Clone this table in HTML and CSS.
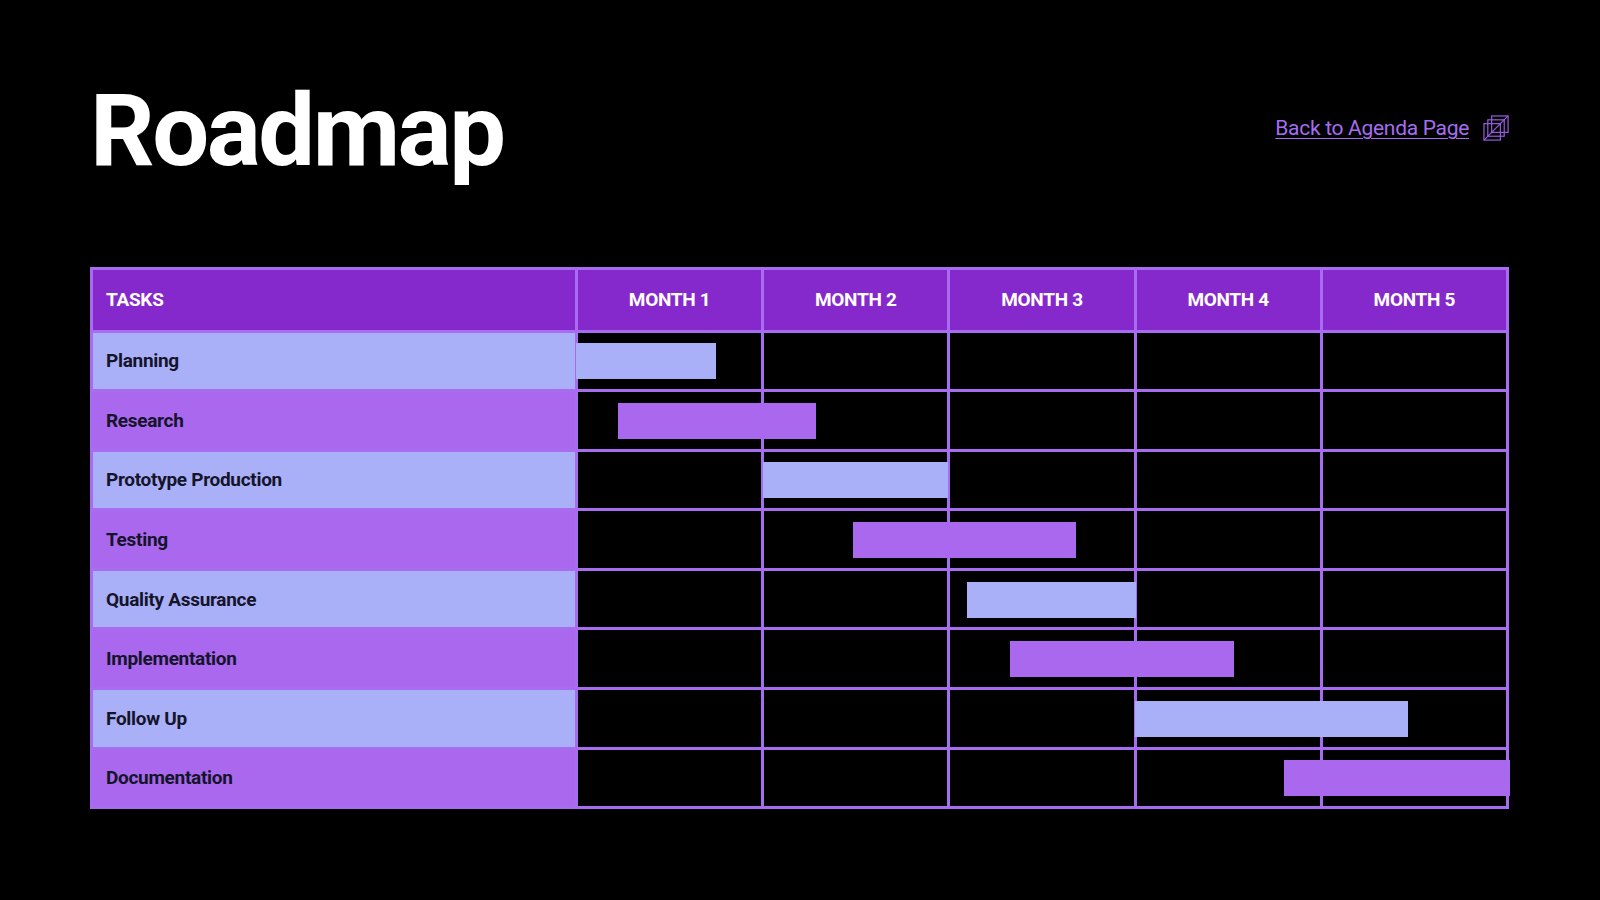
FILE: index.html
```html
<!DOCTYPE html>
<html lang="en">
<head>
<meta charset="utf-8">
<title>Roadmap</title>
<link rel="stylesheet" href="styles.css">
</head>
<body>
<main class="page">
  <header class="top">
    <h1 class="title">Roadmap</h1>
    <a class="back" href="#">
      <span class="back-text">Back to Agenda Page</span>
      <svg class="back-icon" viewBox="0 0 28 28" width="28" height="28" aria-hidden="true">
        <rect x="1" y="9" width="17" height="17" fill="none" stroke="#9d60e6" stroke-width="1.2"/>
        <rect x="5" y="5" width="17" height="17" fill="none" stroke="#9d60e6" stroke-width="1.2"/>
        <rect x="9" y="1" width="17" height="17" fill="none" stroke="#9d60e6" stroke-width="1.2"/>
        <line x1="1" y1="26" x2="26" y2="1" stroke="#9d60e6" stroke-width="1.2"/>
      </svg>
    </a>
  </header>

  <section class="gantt">
    <div class="row head">
      <div class="cell task">TASKS</div>
      <div class="cell month">MONTH 1</div>
      <div class="cell month">MONTH 2</div>
      <div class="cell month">MONTH 3</div>
      <div class="cell month">MONTH 4</div>
      <div class="cell month">MONTH 5</div>
    </div>

    <div class="row light">
      <div class="cell task">Planning</div>
      <div class="cell"></div><div class="cell"></div><div class="cell"></div><div class="cell"></div><div class="cell"></div>
      <div class="bar" style="margin-left:-0.2%;width:15.1%"></div>
    </div>
    <div class="row dark">
      <div class="cell task">Research</div>
      <div class="cell"></div><div class="cell"></div><div class="cell"></div><div class="cell"></div><div class="cell"></div>
      <div class="bar" style="margin-left:4.3%;width:21.3%"></div>
    </div>
    <div class="row light">
      <div class="cell task">Prototype Production</div>
      <div class="cell"></div><div class="cell"></div><div class="cell"></div><div class="cell"></div><div class="cell"></div>
      <div class="bar" style="margin-left:19.9%;width:20%"></div>
    </div>
    <div class="row dark">
      <div class="cell task">Testing</div>
      <div class="cell"></div><div class="cell"></div><div class="cell"></div><div class="cell"></div><div class="cell"></div>
      <div class="bar" style="margin-left:29.6%;width:24.1%"></div>
    </div>
    <div class="row light">
      <div class="cell task">Quality Assurance</div>
      <div class="cell"></div><div class="cell"></div><div class="cell"></div><div class="cell"></div><div class="cell"></div>
      <div class="bar" style="margin-left:41.9%;width:18.2%"></div>
    </div>
    <div class="row dark">
      <div class="cell task">Implementation</div>
      <div class="cell"></div><div class="cell"></div><div class="cell"></div><div class="cell"></div><div class="cell"></div>
      <div class="bar" style="margin-left:46.6%;width:24.1%"></div>
    </div>
    <div class="row light">
      <div class="cell task">Follow Up</div>
      <div class="cell"></div><div class="cell"></div><div class="cell"></div><div class="cell"></div><div class="cell"></div>
      <div class="bar" style="margin-left:60%;width:29.4%"></div>
    </div>
    <div class="row dark">
      <div class="cell task">Documentation</div>
      <div class="cell"></div><div class="cell"></div><div class="cell"></div><div class="cell"></div><div class="cell"></div>
      <div class="bar" style="margin-left:76.1%;width:24.3%"></div>
    </div>
  </section>
</main>
</body>
</html>
```

FILE: styles.css
```css
html, body {
  margin: 0;
  padding: 0;
  background: #000;
}

body {
  width: 1600px;
  height: 900px;
  overflow: hidden;
  font-family: Roboto, "Noto Sans", "DejaVu Sans", sans-serif;
  color: #fff;
}

.page {
  padding: 81px 91px 0 90px;
}

.top {
  display: flex;
  align-items: center;
  justify-content: space-between;
}

.title {
  margin: 0;
  font-size: 101px;
  line-height: 100px;
  font-weight: 700;
  letter-spacing: -2.5px;
  color: #fff;
}

.back {
  display: flex;
  align-items: center;
  gap: 14px;
  padding-bottom: 6px;
  text-decoration: none;
}

.back-text {
  font-size: 21px;
  color: #a56ef0;
  text-decoration: underline;
  text-decoration-thickness: 1px;
  text-underline-offset: 3px;
  letter-spacing: -0.3px;
}

.back-icon {
  display: block;
  width: 27px;
  height: 27px;
  margin-right: -1px;
}

.gantt {
  margin-top: 86px;
  width: 1419px;
  box-sizing: border-box;
  padding: 3px;
  background: #a86cf0;
  display: flex;
  flex-direction: column;
  gap: 3px;
}

.row {
  display: grid;
  grid-template-columns: 482px repeat(5, minmax(0, 1fr));
  grid-template-rows: 100%;
  column-gap: 3px;
  height: 56.6px;
}

.row.head {
  height: 59.5px;
}

.cell {
  grid-row: 1;
  background: #000;
  display: flex;
  align-items: center;
  font-weight: 700;
}

.row > .cell:nth-child(1) { grid-column: 1; }
.row > .cell:nth-child(2) { grid-column: 2; }
.row > .cell:nth-child(3) { grid-column: 3; }
.row > .cell:nth-child(4) { grid-column: 4; }
.row > .cell:nth-child(5) { grid-column: 5; }
.row > .cell:nth-child(6) { grid-column: 6; }

.head .cell {
  background: #8629cc;
  color: #fff;
  font-size: 19px;
  letter-spacing: -0.3px;
}

.head .month {
  justify-content: center;
}

.task {
  padding-left: 13px;
  font-size: 19px;
  letter-spacing: -0.3px;
  color: #14142a;
}

.head .task {
  color: #fff;
}

.light .task {
  background: #aab0f8;
}

.dark .task {
  background: #a968ee;
}

.bar {
  grid-row: 1;
  grid-column: 2 / 7;
  align-self: center;
  height: 36px;
  margin-top: 1px;
}

.light .bar {
  background: #aab0f8;
}

.dark .bar {
  background: #a968ee;
}
```
